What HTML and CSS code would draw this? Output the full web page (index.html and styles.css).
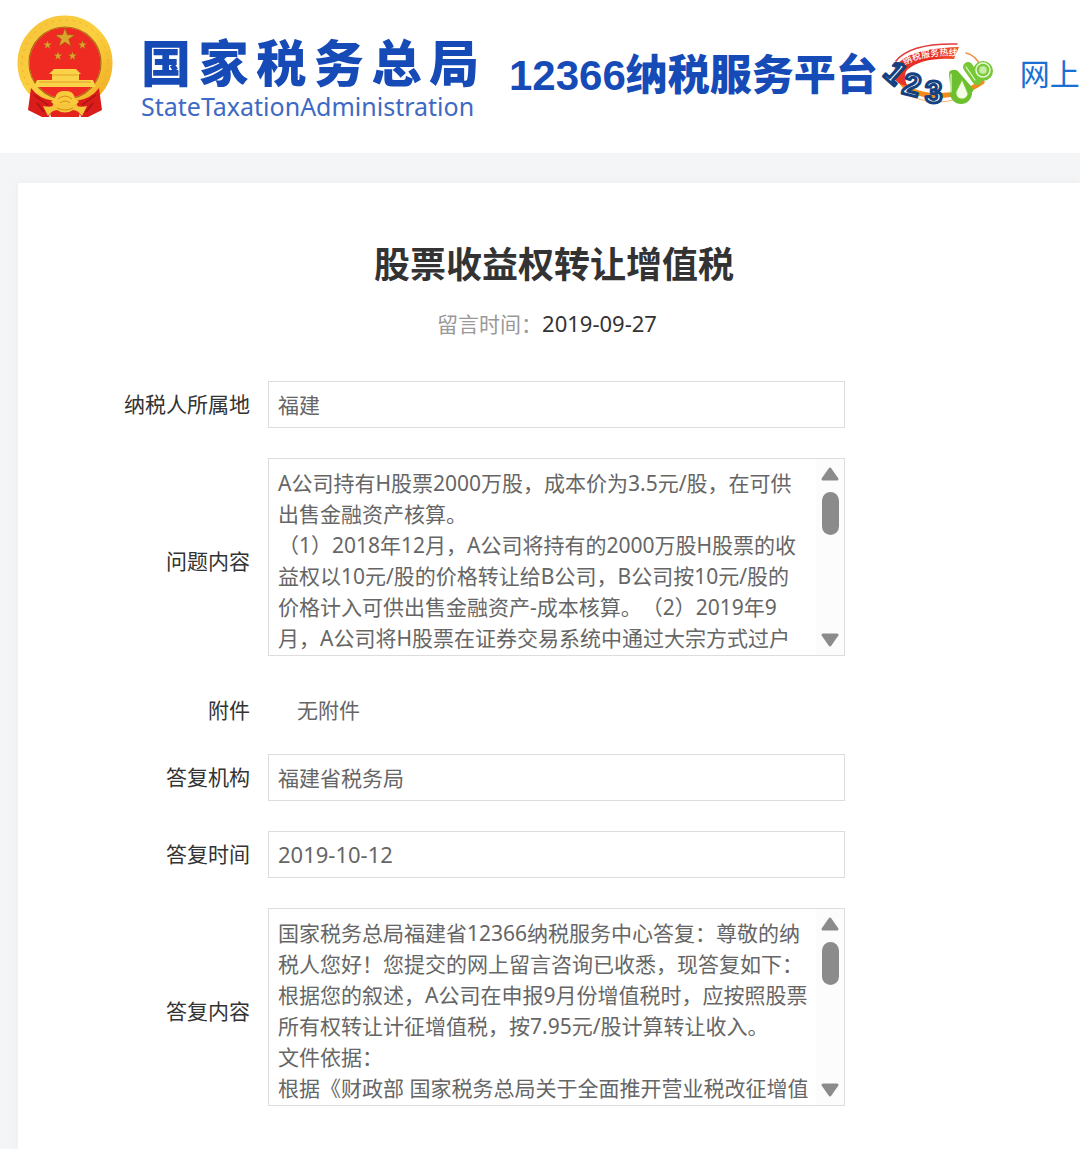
FILE: index.html
```html
<!DOCTYPE html>
<html lang="zh-CN">
<head>
<meta charset="utf-8">
<title>股票收益权转让增值税</title>
<link rel="stylesheet" href="styles.css">
</head>
<body>
<header class="site-header">
  <svg class="emblem" viewBox="0 0 96 104" aria-hidden="true">
    <defs>
      <path id="star" d="M0-10 2.3-3.2 9.5-3.1 3.7 1.2 5.9 8.1 0 4-5.9 8.1-3.7 1.2-9.5-3.1-2.3-3.2Z"/>
      <linearGradient id="gold" x1="0" y1="0" x2="1" y2="1">
        <stop offset="0" stop-color="#f6c43a"/><stop offset=".5" stop-color="#fbd040"/><stop offset="1" stop-color="#f0ac22"/>
      </linearGradient>
    </defs>
    <circle cx="48" cy="48" r="41.5" fill="#ee2a22" stroke="url(#gold)" stroke-width="12"/>
    <circle cx="48" cy="48" r="36" fill="none" stroke="#b06a18" stroke-width="1.2"/>
    <circle cx="48" cy="48" r="43" fill="none" stroke="#e3a528" stroke-width=".8" stroke-dasharray="2 5"/>
    <g fill="#dba62c" stroke="#9a5a12" stroke-width=".5">
      <use href="#star" transform="translate(48 23)"/>
      <use href="#star" transform="translate(30.5 30) scale(.45)"/>
      <use href="#star" transform="translate(65.5 30) scale(.45)"/>
      <use href="#star" transform="translate(41 41) scale(.45)"/>
      <use href="#star" transform="translate(55.5 41) scale(.45)"/>
    </g>
    <path d="M37 54H59L64 59H62V65H76L79 72H17L20 65H35V59H32Z" fill="#fbd348"/>
    <path d="M35 60H61M22 67H74" stroke="#e2a02a"/>
    <path d="M14 73Q22 84 37 86L32 102H25L11 95ZM82 73Q74 84 59 86L64 102H71L85 95Z" fill="#da1c1a"/>
    <path d="M17 80 31 90M79 80 65 90M20 88 27 97M76 88 69 97" stroke="#ae1212" stroke-width="1.5"/>
    <path d="M32 94H64L62 102H34Z" fill="#e3241d"/>
    <path d="M38 83Q40 75 48 76 56 75 58 83L62 87Q57 92 48 90 39 92 34 87Z" fill="#f9ca3c"/>
    <path d="M26 91Q33 93 40 90 48 87 56 90 63 93 70 91L65 101Q61 95 56 95 48 100 40 95 35 95 31 101Z" fill="#f5c53a"/>
    <path d="M41 84Q48 78 55 84M43 88Q48 84 53 88M40 93Q48 97 56 93" fill="none" stroke="#d78b1b"/>
  </svg>
  <div class="brand">
    <div class="brand-name">国家税务总局</div>
    <div class="brand-latin">StateTaxationAdministration</div>
  </div>
  <div class="platform">12366纳税服务平台</div>
  <svg class="hotline" viewBox="0 0 120 74" role="img" aria-label="12366纳税服务热线">
    <defs>
      <linearGradient id="band"><stop offset="0" stop-color="#e8392a"/><stop offset=".6" stop-color="#e5261f"/><stop offset="1" stop-color="#f4602a"/></linearGradient>
      <path id="slogan" d="M27 29Q46 18 80 20"/>
    </defs>
    <g fill="none" stroke-linecap="round">
      <path d="M20 40Q26 56 50 59 82 62 104 46" stroke="#f58a1c" stroke-width="5"/>
      <path d="M28 58Q60 74 92 58" stroke="#f7b46a" stroke-width="1"/>
      <path d="M88 17Q99 20 102 30" stroke="#ef8f45" stroke-width="1.5"/>
      <path d="M18 25Q32 7 79 8" stroke="#e23a3a" stroke-width="1.5"/>
    </g>
    <path d="M15 40Q16 13 81 11L76 23Q44 21 29 34 25 39 29 50 18 48 15 40Z" fill="url(#band)"/>
    <text class="slogan"><textPath href="#slogan">纳税服务热线</textPath></text>
    <g class="digits">
      <text transform="translate(4 39) rotate(42)">1</text>
      <text transform="translate(23 57) rotate(14)">2</text>
      <text transform="translate(47 67)">3</text>
    </g>
    <g fill="none" stroke-linecap="round">
      <path d="M75 38 77 56M77 38 91 54" stroke="#6cbf2e" stroke-width="8"/>
      <circle cx="83" cy="57" r="8" fill="#6cbf2e" stroke="#6cbf2e" stroke-width="6"/>
      <path d="M84 44 78 56A6 6 0 0 0 90 58Z" fill="#f4fbe9" stroke="#7fce3a" stroke-width="1"/>
      <path d="M90 31 99 44" stroke="#76c835" stroke-width="10"/>
      <circle cx="105" cy="35" r="10" fill="#76c835"/>
      <circle cx="105" cy="34" r="7" stroke="#e9f8d9" stroke-width="1.5"/>
      <circle cx="105" cy="34" r="4" fill="#c9ecab" stroke="#9edc6c"/>
      <path d="M73 38 73 56M88 31 97 44" stroke="#e9f8d9" stroke-width="1.2"/>
    </g>
  </svg>
  <a class="nav-link" href="#">网上</a>
</header>
<main class="card">
  <h1 class="title">股票收益权转让增值税</h1>
  <p class="posted">留言时间：<time class="date">2019-09-27</time></p>
  <form class="form">
    <div class="row">
      <label class="label" for="region">纳税人所属地</label>
      <input class="field" id="region" value="福建" readonly>
    </div>
    <div class="row row-tall">
      <label class="label" for="question">问题内容</label>
      <div class="area">
        <textarea class="field text" id="question" readonly>A公司持有H股票2000万股，成本价为3.5元/股，在可供
出售金融资产核算。
（1）2018年12月，A公司将持有的2000万股H股票的收
益权以10元/股的价格转让给B公司，B公司按10元/股的
价格计入可供出售金融资产-成本核算。（2）2019年9
月，A公司将H股票在证券交易系统中通过大宗方式过户</textarea>
        <div class="scroll" aria-hidden="true">
          <svg class="arrow" viewBox="0 0 18 14"><path d="M9 2 16 12H2Z"/></svg>
          <div class="thumb"></div>
          <svg class="arrow arrow-down" viewBox="0 0 18 14"><path d="M9 12 16 2H2Z"/></svg>
        </div>
      </div>
    </div>
    <div class="row row-tall row-plain">
      <span class="label">附件</span>
      <span class="plain">无附件</span>
    </div>
    <div class="row">
      <label class="label" for="office">答复机构</label>
      <input class="field" id="office" value="福建省税务局" readonly>
    </div>
    <div class="row">
      <label class="label" for="replied">答复时间</label>
      <input class="field date" id="replied" value="2019-10-12" readonly>
    </div>
    <div class="row row-tall">
      <label class="label" for="answer">答复内容</label>
      <div class="area">
        <textarea class="field text" id="answer" readonly>国家税务总局福建省12366纳税服务中心答复：尊敬的纳
税人您好！您提交的网上留言咨询已收悉，现答复如下：
根据您的叙述，A公司在申报9月份增值税时，应按照股票
所有权转让计征增值税，按7.95元/股计算转让收入。
文件依据：
根据《财政部 国家税务总局关于全面推开营业税改征增值</textarea>
        <div class="scroll" aria-hidden="true">
          <svg class="arrow" viewBox="0 0 18 14"><path d="M9 2 16 12H2Z"/></svg>
          <div class="thumb"></div>
          <svg class="arrow arrow-down" viewBox="0 0 18 14"><path d="M9 12 16 2H2Z"/></svg>
        </div>
      </div>
    </div>
  </form>
</main>
</body>
</html>
```
FILE: styles.css
```css
* { box-sizing: border-box; }
body {
  margin: 0;
  min-height: 100vh;
  display: flex;
  flex-direction: column;
  overflow-x: hidden;
  background: #f4f5f7;
  color: #333;
  font: 21px/31px "Noto Sans", "Noto Sans CJK SC", sans-serif;
  text-spacing-trim: space-all;
}
.site-header {
  display: flex;
  align-items: flex-start;
  height: 153px;
  padding: 15px 0 0 17px;
  background: #fff;
  white-space: nowrap;
  overflow: hidden;
}
.site-header > * { flex-shrink: 0; }
.emblem { width: 96px; height: 104px; }
.brand { width: 338px; margin: 17px 0 0 28px; color: #164bb7; }
.brand-name {
  font: 900 50px/56px "Noto Sans CJK SC", sans-serif;
  text-align-last: justify;
}
.brand-latin { font-size: 25px; line-height: 36px; color: #3e69c4; }
.platform {
  margin: 36px 0 0 30px;
  color: #164bb7;
  font: 900 42px/50px "Liberation Sans", "Noto Sans CJK SC", sans-serif;
}
.hotline { width: 120px; height: 74px; margin: 21px 0 0; }
.slogan { fill: #fff; font-size: 9px; font-weight: 500; }
.digits {
  fill: #fff;
  stroke: #14417f;
  stroke-width: 3px;
  stroke-linejoin: round;
  font: 700 31px "Liberation Sans", sans-serif;
}
.nav-link {
  margin: 37px 0 0 22px;
  color: #1a6fd4;
  font-size: 30px;
  line-height: 44px;
  text-decoration: none;
}
.card {
  flex: 1;
  margin: 30px 0 0 18px;
  padding: 56px 0 43px;
  background: #fff;
  box-shadow: 0 0 12px rgba(0, 0, 0, .04);
}
.title {
  margin: 0;
  padding-left: 10px;
  font-size: 36px;
  line-height: 52px;
  text-align: center;
}
.posted { margin: 17px 0 41px; padding-right: 4px; color: #999; text-align: center; }
.date { font-size: 22px; }
.posted .date { color: #333; }
.form { display: grid; gap: 30px; padding-right: 235px; }
.row {
  display: grid;
  grid-template-columns: 232px 1fr;
  gap: 18px;
  align-items: center;
}
.label { text-align: right; }
.row-tall .label, .plain { padding-top: 9px; }
.row-plain { height: 38px; }
.plain { padding-left: 29px; color: #666; }
.field {
  display: block;
  width: 100%;
  height: 47px;
  margin: 0;
  padding: 0 9px 2px;
  border: 1px solid #ddd;
  background: #fff;
  color: #666;
  font-family: inherit;
  font-size: 21px;
  line-height: 31px;
  text-spacing-trim: inherit;
  outline: 0;
}
.field.date { font-size: 22px; }
.area { position: relative; }
.field.text {
  height: 198px;
  padding-top: 9px;
  resize: none;
  white-space: pre;
  overflow: hidden;
}
.scroll {
  position: absolute;
  top: 1px;
  right: 1px;
  bottom: 1px;
  width: 28px;
  padding: 8px 0;
  display: flex;
  flex-direction: column;
  align-items: center;
  background: #fcfcfc;
}
.arrow {
  width: 18px;
  height: 14px;
  fill: #8b8b8b;
  stroke: #8b8b8b;
  stroke-width: 3;
  stroke-linejoin: round;
}
.arrow-down { margin-top: auto; }
.thumb { width: 17px; height: 43px; margin-top: 11px; border-radius: 9px; background: #8b8b8b; }
```
